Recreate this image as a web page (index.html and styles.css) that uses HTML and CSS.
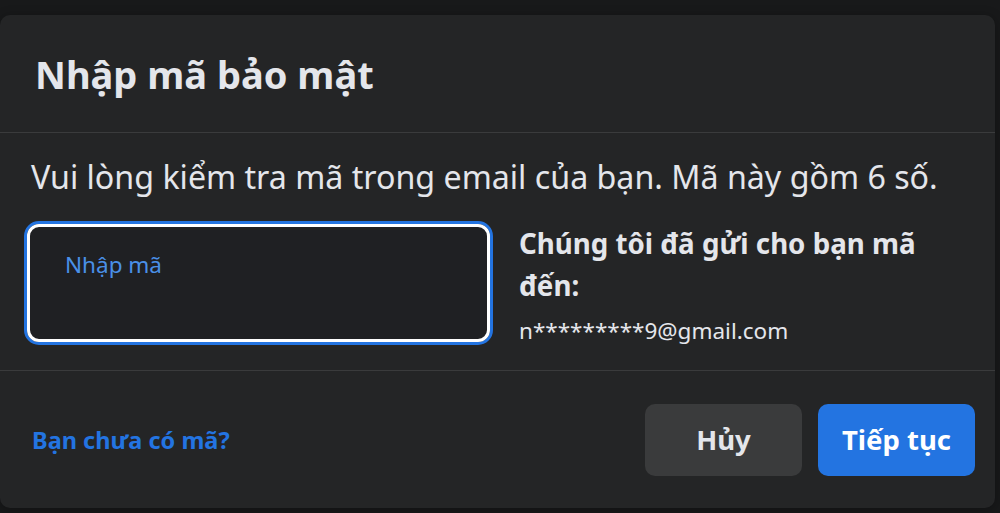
FILE: index.html
```html
<!DOCTYPE html>
<html lang="vi">
<head>
    <meta charset="utf-8">
    <title>Nhập mã bảo mật</title>
    <link rel="stylesheet" href="styles.css">
</head>
<body>

    <div class="modal">
        <!-- Header -->
        <div class="modal-head">
            <h2>Nhập mã bảo mật</h2>
        </div>

        <!-- Body -->
        <div class="modal-body">
            <p class="lead">Vui lòng kiểm tra mã trong email của bạn. Mã này gồm 6 số.</p>
            <div class="code-row">
                <div class="code-box">
                    <input type="text" class="code-input" placeholder="Nhập mã">
                </div>
                <div class="sent-to">
                    <div class="sent-title">Chúng tôi đã gửi cho bạn mã đến:</div>
                    <div class="sent-email">n*********9@gmail.com</div>
                </div>
            </div>
        </div>

        <!-- Footer -->
        <div class="modal-foot">
            <a href="#" class="no-code">Bạn chưa có mã?</a>
            <div class="actions">
                <button class="btn btn-grey">Hủy</button>
                <button class="btn btn-blue">Tiếp tục</button>
            </div>
        </div>
    </div>

</body>
</html>
```

FILE: styles.css
```css
body {
    margin: 0;
    padding-top: 15px;
    background: #18191a;
    font-family: "Noto Sans", "Open Sans", sans-serif;
    color: #e4e6eb;
    height: 513px;
    overflow: hidden;
}
.modal {
    width: 995px;
    height: 493px;
    background: #242526;
    border-radius: 10px;
    box-shadow: 0 2px 12px rgba(0, 0, 0, 0.3);
    display: flex;
    flex-direction: column;
}
.modal-head {
    height: 117px;
    border-bottom: 1px solid #3a3b3c;
    display: flex;
    align-items: center;
    padding-left: 35px;
}
.modal-head h2 {
    margin: 0;
    font-size: 38px;
    font-weight: 700;
}
.modal-body {
    height: 237px;
    border-bottom: 1px solid #3a3b3c;
    padding: 0 32px 0 24px;
}
.lead {
    margin: 26px 0 0 7px;
    font-size: 32.2px;
    line-height: 36px;
    white-space: nowrap;
}
.code-row {
    display: flex;
    margin-top: 26px;
}
.code-box {
    width: 463px;
    height: 118px;
    border: 3px solid #2374e1;
    border-radius: 15px;
    flex-shrink: 0;
}
.code-input {
    box-sizing: border-box;
    width: 100%;
    height: 100%;
    border: 3px solid #ffffff;
    border-radius: 12px;
    background: #1f2023;
    outline: none;
    color: #e4e6eb;
    font-family: inherit;
    font-size: 22.5px;
    padding: 0 0 38px 35px;
}
.code-input::placeholder {
    color: #4a90e8;
}
.sent-to {
    padding-left: 26px;
    padding-top: 1px;
    width: 420px;
}
.sent-title {
    font-size: 27.7px;
    font-weight: 700;
    line-height: 42px;
}
.sent-email {
    font-size: 22.5px;
    margin-top: 9px;
}
.modal-foot {
    flex: 1;
    display: flex;
    align-items: center;
    justify-content: space-between;
    padding: 0 20px 0 32px;
}
.no-code {
    color: #2374e1;
    font-size: 23.5px;
    font-weight: 700;
    text-decoration: none;
}
.actions {
    display: flex;
    gap: 16px;
}
.btn {
    width: 157px;
    height: 72px;
    border: none;
    border-radius: 10px;
    font-family: inherit;
    font-size: 27.5px;
    font-weight: 700;
    cursor: pointer;
}
.btn-grey {
    background: #3a3b3c;
    color: #e4e6eb;
}
.btn-blue {
    background: #2374e1;
    color: #ffffff;
}
```
